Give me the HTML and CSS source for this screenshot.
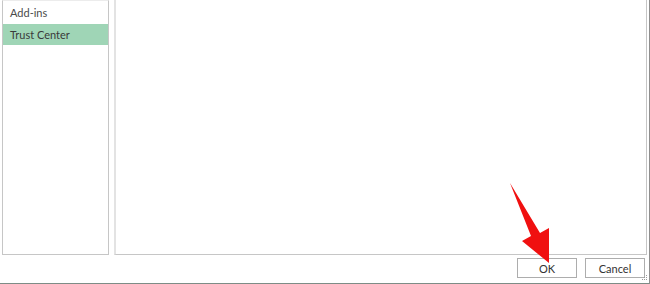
FILE: index.html
```html
<!DOCTYPE html>
<html>
<head>
<meta charset="utf-8">
<link rel="stylesheet" href="styles.css">
</head>
<body>
<div class="dialog">
  <div class="content">
    <div class="nav">
      <div class="item">Add-ins</div>
      <div class="item selected">Trust Center</div>
    </div>
    <div class="main"></div>
  </div>
  <div class="footer">
    <button class="btn">OK</button>
    <button class="btn">Cancel</button>
  </div>
  <svg class="grip" width="7" height="7" viewBox="0 0 7 7">
    <rect x="5" y="0" width="1" height="1" fill="#9a9a9a"/>
    <rect x="3" y="2" width="1" height="1" fill="#9a9a9a"/>
    <rect x="5" y="2" width="1" height="1" fill="#9a9a9a"/>
    <rect x="1" y="4" width="1" height="1" fill="#9a9a9a"/>
    <rect x="3" y="4" width="1" height="1" fill="#9a9a9a"/>
    <rect x="5" y="4" width="1" height="1" fill="#9a9a9a"/>
  </svg>
  <svg class="arrow" width="650" height="284" viewBox="0 0 650 284">
    <polygon points="510,183 531,236 522,241 549,263 549,228 540,233" fill="#f01010"/>
  </svg>
</div>
</body>
</html>
```
FILE: styles.css
```css
html, body {
  margin: 0;
  padding: 0;
  background: #ffffff;
}
.dialog {
  position: relative;
  width: 650px;
  height: 284px;
  box-sizing: border-box;
  border-right: 1px solid #8f8f8f;
  border-bottom: 1px solid #7d8c86;
  font-family: "Lato", "Liberation Sans", sans-serif;
  font-size: 11px;
  color: #4a4a4a;
  display: flex;
  flex-direction: column;
}
.content {
  display: flex;
  padding-left: 2px;
  height: 255px;
}
.nav {
  width: 107px;
  box-sizing: border-box;
  border: 1px solid #c6c6c6;
  border-top: 1px solid #ececec;
  padding-top: 1px;
}
.item {
  height: 22px;
  line-height: 22px;
  padding-left: 7px;
}
.selected {
  background: #9fd5b6;
  color: #3a3a3a;
  height: 21px;
  line-height: 21px;
}
.main {
  margin-left: 5px;
  width: 533px;
  box-sizing: border-box;
  border: 1px solid #c6c6c6;
  border-left: 2px solid #e3e3e3;
  border-top: none;
}
.footer {
  display: flex;
  justify-content: flex-end;
  gap: 8px;
  padding-top: 3px;
  padding-right: 4px;
}
.btn {
  width: 60px;
  height: 20px;
  box-sizing: border-box;
  background: #ffffff;
  border: 1px solid #adadad;
  font-family: inherit;
  font-size: 11px;
  color: #333333;
  padding: 0;
  margin: 0;
}
.grip {
  position: absolute;
  right: 1px;
  bottom: 1px;
}
.arrow {
  position: absolute;
  left: 0;
  top: 0;
  pointer-events: none;
}
```
